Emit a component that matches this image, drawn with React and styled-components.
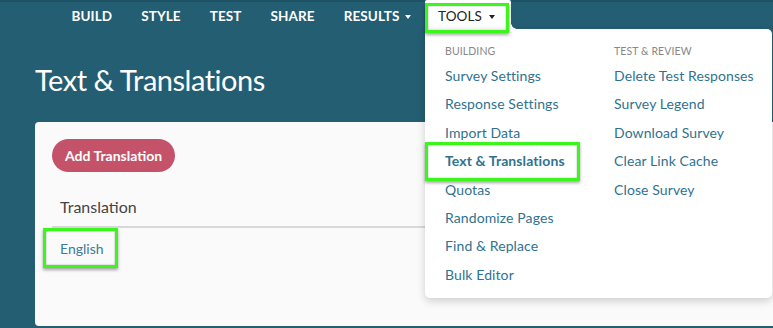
import React from 'react'
import styled, { createGlobalStyle } from 'styled-components'

const GlobalStyle = createGlobalStyle`
  html, body {
    margin: 0;
    height: 100%;
    overflow: hidden;
  }
  body {
    background: linear-gradient(#1d5264 0, #1d5264 2px, #235e72 2px);
    font-family: Lato, "Open Sans", sans-serif;
  }
`;

const Page = styled.div`
  display: flex;
  flex-direction: column;
  min-height: 328px;
`;

const Nav = styled.nav`
  display: flex;
  height: 29px;
  padding-left: 57px;
`;

const NavItem = styled.div`
  position: relative;
  display: flex;
  align-items: center;
  gap: 5px;
  padding: 3px 14.5px 0 14.5px;
  color: #fff;
  font-size: 13.5px;
  font-weight: 700;
  letter-spacing: 0.1px;
`;

const ToolsTab = styled(NavItem)`
  width: 86px;
  box-sizing: border-box;
  padding: 3px 0 0 13px;
  gap: 7px;
  color: #222;
  font-weight: 400;
  font-size: 13.5px;
  background: #fff;
  border-radius: 2px 2px 0 0;
  &::before {
    content: '';
    position: absolute;
    right: -6px;
    bottom: 0;
    width: 6px;
    height: 6px;
    background: radial-gradient(circle at 100% 0, transparent 5.5px, #fff 6px);
  }
`;

const Caret = styled.span`
  width: 0;
  height: 0;
  border-left: 3.5px solid transparent;
  border-right: 3.5px solid transparent;
  border-top: 4px solid currentColor;
  margin-top: 1px;
`;

const TabMark = styled.span`
  position: absolute;
  left: 0;
  top: 3px;
  width: 84px;
  height: 30px;
  box-sizing: border-box;
  border: 3px solid #3cf51c;
  box-shadow: 0 2px 3px rgba(0, 0, 0, 0.35), inset 0 0 2px rgba(0, 0, 0, 0.35);
  z-index: 3;
  pointer-events: none;
`;

const Menu = styled.div`
  position: absolute;
  left: 0;
  top: 29px;
  width: 347px;
  height: 269px;
  box-sizing: border-box;
  padding: 14px 0 0 20px;
  background: #fff;
  border-radius: 0 5px 5px 5px;
  box-shadow: 0 3px 8px rgba(0, 0, 0, 0.18);
  display: grid;
  grid-template-columns: 169px 1fr;
  z-index: 2;
`;

const MenuColumn = styled.div`
  display: flex;
  flex-direction: column;
`;

const MenuHeading = styled.div`
  font-size: 10.5px;
  line-height: 16px;
  color: #888;
  text-transform: uppercase;
  margin-bottom: 3px;
  letter-spacing: 0.1px;
`;

const MenuLink = styled.a`
  position: relative;
  display: block;
  font-size: 14px;
  line-height: 28.4px;
  color: #2f7290;
  font-weight: ${p => (p.$current ? 700 : 400)};
  text-decoration: none;
  white-space: nowrap;
  ${p => p.$current && `
    &::after {
      content: '';
      position: absolute;
      left: -20px;
      width: 155px;
      top: -5px;
      bottom: -5px;
      box-sizing: border-box;
      border: 3px solid #3cf51c;
      box-shadow: 0 2px 3px rgba(0, 0, 0, 0.35), inset 0 0 2px rgba(0, 0, 0, 0.35);
    }
  `}
`;

const Title = styled.h1`
  margin: 33px 0 0 35px;
  font-size: 29px;
  line-height: 36px;
  font-weight: 400;
  color: #fff;
  letter-spacing: -0.5px;
`;

const Card = styled.section`
  margin: 24px 0 0 35px;
  height: 204px;
  box-sizing: border-box;
  padding: 17px;
  background: #fafafa;
  border-radius: 4px 0 0 4px;
`;

const AddButton = styled.button`
  height: 33px;
  padding: 0 13px;
  border: none;
  border-radius: 17px;
  background: #c4536a;
  color: #fff;
  font-family: inherit;
  font-size: 14px;
  font-weight: 700;
`;

const Table = styled.table`
  width: 100%;
  margin-top: 14px;
  border-collapse: collapse;
`;

const HeadCell = styled.th`
  padding: 9px 8px 7px;
  text-align: left;
  font-size: 16px;
  line-height: 24px;
  font-weight: 400;
  color: #444;
  border-bottom: 2px solid #d8d8d8;
`;

const Cell = styled.td`
  padding: 9px 8px;
  font-size: 14px;
  line-height: 24px;
`;

const RowLink = styled.a`
  position: relative;
  display: inline-block;
  color: #3b7c99;
  text-decoration: none;
  &::after {
    content: '';
    position: absolute;
    left: -17px;
    right: -14px;
    top: -9px;
    bottom: -7px;
    border: 3px solid #3cf51c;
    box-shadow: 0 2px 3px rgba(0, 0, 0, 0.35), inset 0 0 2px rgba(0, 0, 0, 0.35);
  }
`;

const building = [
  'Survey Settings',
  'Response Settings',
  'Import Data',
  'Text & Translations',
  'Quotas',
  'Randomize Pages',
  'Find & Replace',
  'Bulk Editor',
];

const review = [
  'Delete Test Responses',
  'Survey Legend',
  'Download Survey',
  'Clear Link Cache',
  'Close Survey',
];

function App() {
  return (
    <Page>
      <GlobalStyle />
      <Nav>
        <NavItem>BUILD</NavItem>
        <NavItem>STYLE</NavItem>
        <NavItem>TEST</NavItem>
        <NavItem>SHARE</NavItem>
        <NavItem>RESULTS <Caret /></NavItem>
        <ToolsTab>
          TOOLS <Caret />
          <TabMark />
          <Menu>
            <MenuColumn>
              <MenuHeading>Building</MenuHeading>
              {building.map(item => (
                <MenuLink key={item} $current={item === 'Text & Translations'}>{item}</MenuLink>
              ))}
            </MenuColumn>
            <MenuColumn>
              <MenuHeading>Test &amp; Review</MenuHeading>
              {review.map(item => (
                <MenuLink key={item}>{item}</MenuLink>
              ))}
            </MenuColumn>
          </Menu>
        </ToolsTab>
      </Nav>
      <Title>Text &amp; Translations</Title>
      <Card>
        <AddButton>Add Translation</AddButton>
        <Table>
          <thead>
            <tr><HeadCell>Translation</HeadCell></tr>
          </thead>
          <tbody>
            <tr><Cell><RowLink>English</RowLink></Cell></tr>
          </tbody>
        </Table>
      </Card>
    </Page>
  )
}

export default App
